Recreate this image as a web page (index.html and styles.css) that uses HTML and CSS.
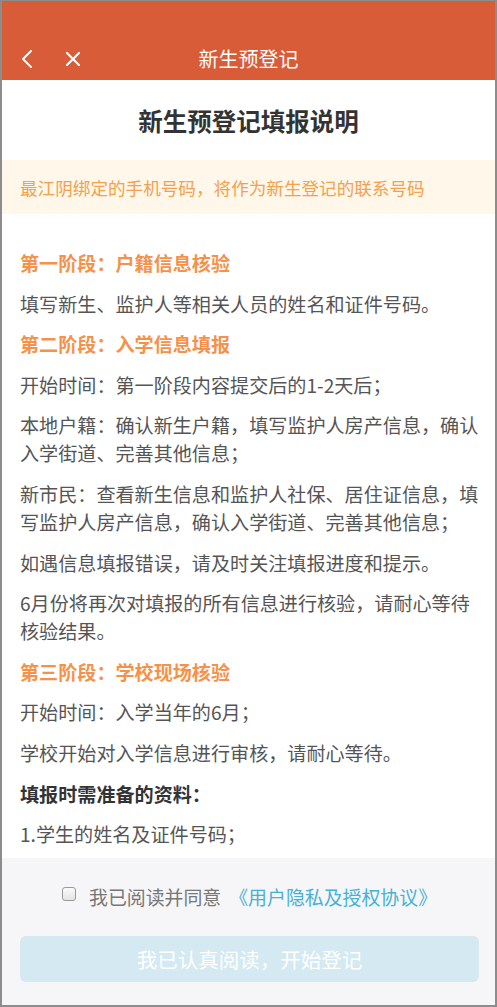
FILE: index.html
```html
<!DOCTYPE html>
<html lang="zh-CN">
<head>
<meta charset="utf-8">
<title>新生预登记</title>
<link rel="stylesheet" href="styles.css">
</head>
<body>
<div class="frame">
  <header class="topbar">
    <div class="navrow">
      <span class="nav-btn back">
        <svg width="14" height="20" viewBox="0 0 14 20"><path d="M11 2 L3 10 L11 18" fill="none" stroke="#fff" stroke-width="2" stroke-linecap="round" stroke-linejoin="round"/></svg>
      </span>
      <span class="nav-btn close">
        <svg width="16" height="16" viewBox="0 0 16 16"><path d="M2 2 L14 14 M14 2 L2 14" fill="none" stroke="#fff" stroke-width="2.2" stroke-linecap="round"/></svg>
      </span>
      <h1 class="nav-title">新生预登记</h1>
    </div>
  </header>
  <main class="content">
    <h2 class="page-title">新生预登记填报说明</h2>
    <div class="notice">最江阴绑定的手机号码，将作为新生登记的联系号码</div>
    <div class="body">
      <p class="stage">第一阶段：户籍信息核验</p>
      <p>填写新生、监护人等相关人员的姓名和证件号码。</p>
      <p class="stage">第二阶段：入学信息填报</p>
      <p>开始时间：第一阶段内容提交后的1-2天后；</p>
      <p>本地户籍：确认新生户籍，填写监护人房产信息，确认入学街道、完善其他信息；</p>
      <p>新市民：查看新生信息和监护人社保、居住证信息，填写监护人房产信息，确认入学街道、完善其他信息；</p>
      <p>如遇信息填报错误，请及时关注填报进度和提示。</p>
      <p>6月份将再次对填报的所有信息进行核验，请耐心等待核验结果。</p>
      <p class="stage">第三阶段：学校现场核验</p>
      <p>开始时间：入学当年的6月；</p>
      <p>学校开始对入学信息进行审核，请耐心等待。</p>
      <p class="strong">填报时需准备的资料：</p>
      <p>1.学生的姓名及证件号码；</p>
    </div>
  </main>
  <footer class="footer">
    <div class="agree">
      <span class="checkbox"></span>
      <span class="agree-text">我已阅读并同意</span>
      <span class="agree-link">《用户隐私及授权协议》</span>
    </div>
    <button class="start-btn" type="button">我已认真阅读，开始登记</button>
  </footer>
</div>
</body>
</html>
```
FILE: styles.css
```css
* { box-sizing: border-box; }
html, body {
  margin: 0;
  padding: 0;
  background: #8c8c8c;
}
body {
  font-family: "Noto Sans CJK SC", "Noto Sans", sans-serif;
  width: 497px;
  height: 1007px;
  padding: 1px 2px 2px 2px;
}
.frame {
  height: 1004px;
  background: #fff;
  display: flex;
  flex-direction: column;
  overflow: hidden;
}
.topbar {
  flex: 0 0 79px;
  background: #d95c38;
  display: flex;
  flex-direction: column;
  justify-content: flex-end;
}
.navrow {
  height: 46px;
  display: flex;
  align-items: center;
  padding-left: 18px;
  position: relative;
}
.nav-btn {
  display: flex;
  align-items: center;
  justify-content: center;
}
.back { width: 14px; height: 20px; margin-top: 4px; }
.close { width: 16px; height: 16px; margin-left: 31px; margin-top: 4px; }
.nav-title {
  position: absolute;
  left: 0;
  right: 0;
  top: 0;
  bottom: 0;
  margin: 0;
  display: flex;
  align-items: center;
  justify-content: center;
  font-size: 20px;
  font-weight: normal;
  color: #fff;
  padding-top: 2px;
  pointer-events: none;
}
.content {
  flex: 1 1 auto;
  overflow: hidden;
}
.page-title {
  margin: 0;
  height: 80px;
  display: flex;
  align-items: center;
  justify-content: center;
  font-size: 24.5px;
  font-weight: bold;
  color: #333;
}
.notice {
  height: 54px;
  display: flex;
  align-items: center;
  padding-left: 18px;
  background: #fef7ea;
  color: #f2a14f;
  font-size: 17.6px;
}
.body {
  padding: 35px 10px 0 18px;
}
.body p {
  margin: 0 0 12.6px 0;
  font-size: 19.1px;
  line-height: 28px;
  color: #555;
}
.body p.stage {
  color: #f6914a;
  font-weight: bold;
}
.body p.strong {
  color: #333;
  font-weight: bold;
}
.footer {
  flex: 0 0 147px;
  background: #f6f6f8;
  display: flex;
  flex-direction: column;
  align-items: stretch;
  padding: 21px 16px 23px 18px;
}
.agree {
  height: 36px;
  display: flex;
  align-items: center;
  justify-content: center;
  margin-bottom: 21px;
  font-size: 18.9px;
  line-height: 26px;
}
.checkbox {
  flex: 0 0 14px;
  width: 14px;
  height: 14px;
  border: 1px solid #9a9a9a;
  border-radius: 3px;
  background: linear-gradient(#fafafa, #e4e4e4);
  margin-right: 13px;
  margin-top: -6px;
}
.agree-text { color: #777; margin-right: 8px; }
.agree-link { color: #45b2d4; }
.start-btn {
  height: 46px;
  border: none;
  border-radius: 6px;
  background: #d4e9f1;
  color: #fff;
  font-family: "Noto Sans CJK SC", "Noto Sans", sans-serif;
  font-size: 20.5px;
  padding: 0;
}
```
